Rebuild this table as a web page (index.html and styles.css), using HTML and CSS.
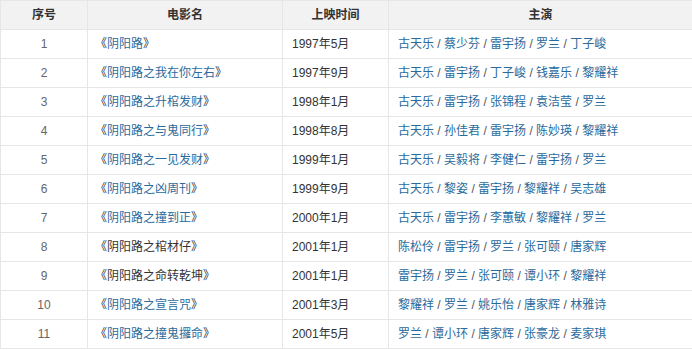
FILE: index.html
```html
<!DOCTYPE html>
<html lang="zh-CN">
<head>
<meta charset="utf-8">
<title>阴阳路</title>
<link rel="stylesheet" href="styles.css">
</head>
<body>
<table class="films">
  <colgroup>
    <col class="c-no"><col class="c-title"><col class="c-date"><col class="c-cast">
  </colgroup>
  <thead>
    <tr><th>序号</th><th>电影名</th><th>上映时间</th><th>主演</th></tr>
  </thead>
  <tbody>
    <tr><td class="no">1</td><td class="title">《<a>阴阳路</a>》</td><td class="date">1997年5月</td><td class="cast"><a>古天乐</a> / <a>蔡少芬</a> / <a>雷宇扬</a> / <a>罗兰</a> / <a>丁子峻</a></td></tr>
    <tr><td class="no">2</td><td class="title">《<a>阴阳路之我在你左右</a>》</td><td class="date">1997年9月</td><td class="cast"><a>古天乐</a> / <a>雷宇扬</a> / <a>丁子峻</a> / <a>钱嘉乐</a> / <a>黎耀祥</a></td></tr>
    <tr><td class="no">3</td><td class="title">《<a>阴阳路之升棺发财</a>》</td><td class="date">1998年1月</td><td class="cast"><a>古天乐</a> / <a>雷宇扬</a> / <a>张锦程</a> / <a>袁洁莹</a> / <a>罗兰</a></td></tr>
    <tr><td class="no">4</td><td class="title">《<a>阴阳路之与鬼同行</a>》</td><td class="date">1998年8月</td><td class="cast"><a>古天乐</a> / <a>孙佳君</a> / <a>雷宇扬</a> / <a>陈妙瑛</a> / <a>黎耀祥</a></td></tr>
    <tr><td class="no">5</td><td class="title">《<a>阴阳路之一见发财</a>》</td><td class="date">1999年1月</td><td class="cast"><a>古天乐</a> / <a>吴毅将</a> / <a>李健仁</a> / <a>雷宇扬</a> / <a>罗兰</a></td></tr>
    <tr><td class="no">6</td><td class="title">《<a>阴阳路之凶周刊</a>》</td><td class="date">1999年9月</td><td class="cast"><a>古天乐</a> / <a>黎姿</a> / <a>雷宇扬</a> / <a>黎耀祥</a> / <a>吴志雄</a></td></tr>
    <tr><td class="no">7</td><td class="title">《<a>阴阳路之撞到正</a>》</td><td class="date">2000年1月</td><td class="cast"><a>古天乐</a> / <a>雷宇扬</a> / <a>李蕙敏</a> / <a>黎耀祥</a> / <a>罗兰</a></td></tr>
    <tr><td class="no">8</td><td class="title">《阴阳路之棺材仔》</td><td class="date">2001年1月</td><td class="cast"><a>陈松伶</a> / <a>雷宇扬</a> / <a>罗兰</a> / <a>张可颐</a> / <a>唐家辉</a></td></tr>
    <tr><td class="no">9</td><td class="title">《阴阳路之命转乾坤》</td><td class="date">2001年1月</td><td class="cast"><a>雷宇扬</a> / <a>罗兰</a> / <a>张可颐</a> / <a>谭小环</a> / <a>黎耀祥</a></td></tr>
    <tr><td class="no">10</td><td class="title">《<a>阴阳路之宣言咒</a>》</td><td class="date">2001年3月</td><td class="cast"><a>黎耀祥</a> / <a>罗兰</a> / <a>姚乐怡</a> / <a>唐家辉</a> / <a>林雅诗</a></td></tr>
    <tr><td class="no">11</td><td class="title">《<a>阴阳路之撞鬼攞命</a>》</td><td class="date">2001年5月</td><td class="cast"><a>罗兰</a> / <a>谭小环</a> / <a>唐家辉</a> / <a>张豪龙</a> / <a>麦家琪</a></td></tr>
  </tbody>
</table>
</body>
</html>
```
FILE: styles.css
```css
html, body {
  margin: 0;
  padding: 0;
  background: #ffffff;
}

body {
  font-family: "Liberation Sans", "Noto Sans CJK SC", sans-serif;
  font-size: 12px;
  color: #333333;
}

.films {
  width: 692px;
  border-collapse: collapse;
  table-layout: fixed;
}

.c-no { width: 87px; }
.c-title { width: 195px; }
.c-date { width: 106px; }
.c-cast { width: 304px; }

.films th,
.films td {
  height: 28px;
  border: 1px solid #e6e6e6;
  padding: 0 9px;
  line-height: 18px;
  white-space: nowrap;
  vertical-align: middle;
}

.films th {
  background: #f2f2f2;
  font-weight: bold;
  color: #333333;
  text-align: center;
}

.films .no {
  text-align: center;
  color: #666666;
}

.films .title {
  padding-left: 7px;
  color: #333333;
}

.films .date {
  color: #333333;
}

.films .cast {
  color: #555555;
}

.films a {
  color: #2a6a9c;
  text-decoration: none;
}
```
